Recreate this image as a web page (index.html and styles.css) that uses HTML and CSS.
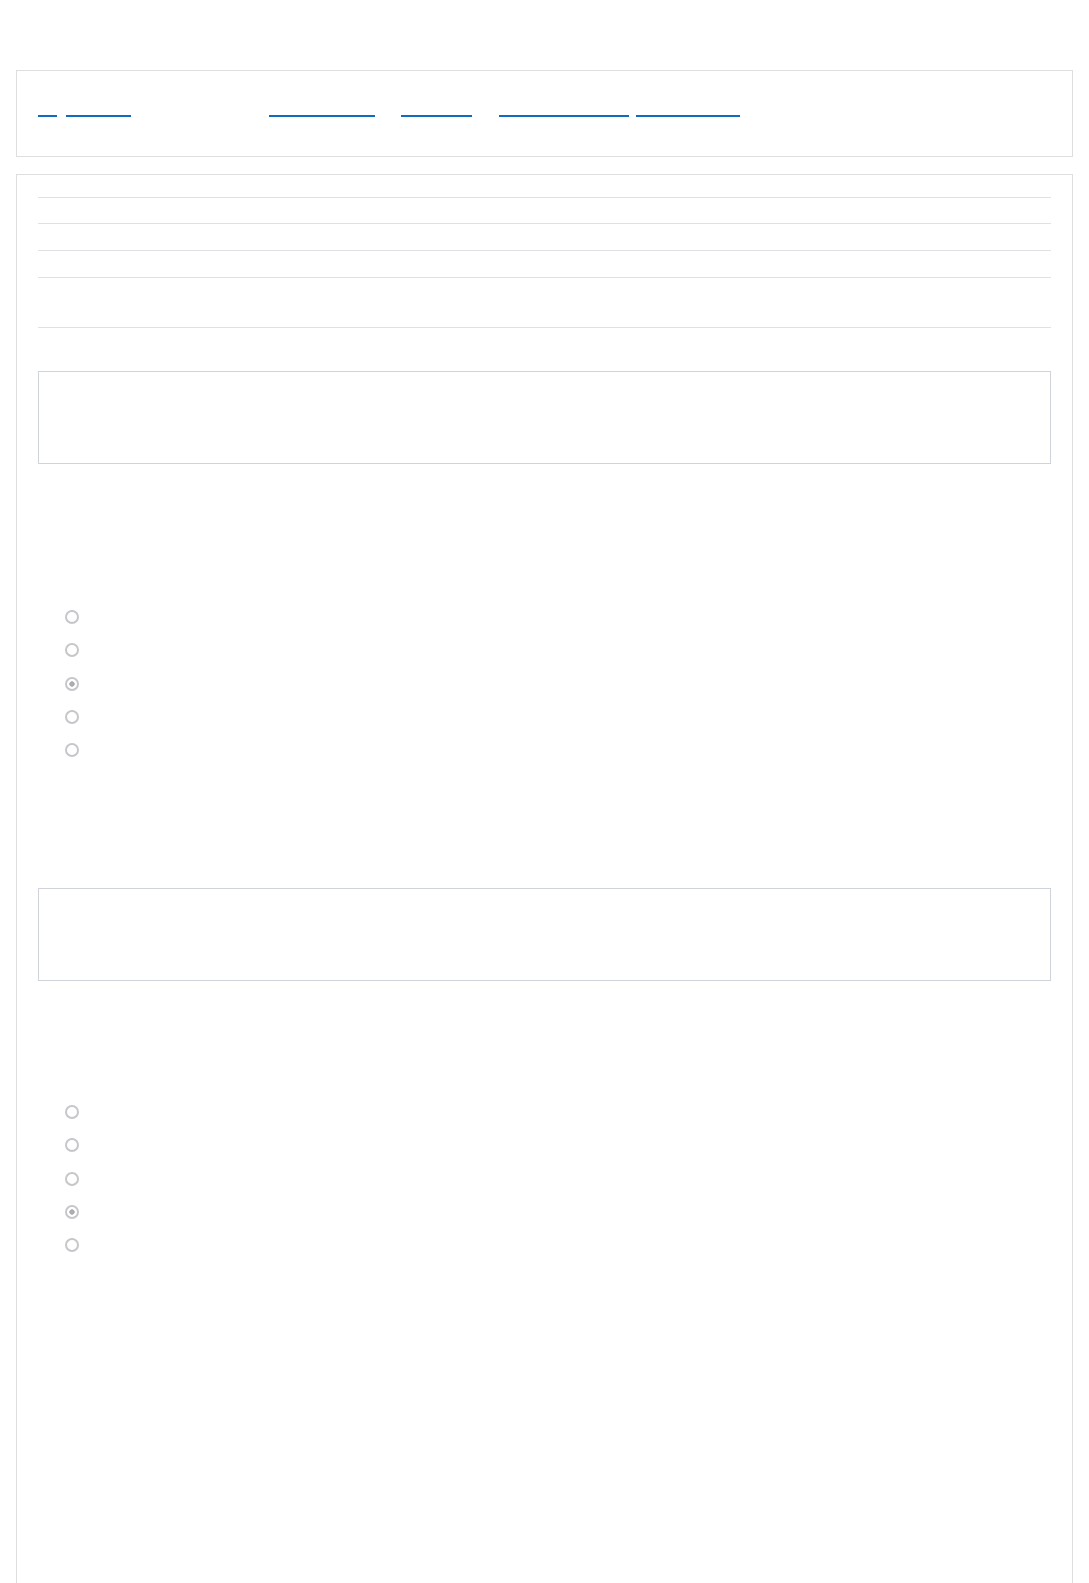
FILE: index.html
```html
<!DOCTYPE html>
<html>
<head>
<meta charset="utf-8">
<title>Quiz review</title>
<link rel="stylesheet" href="styles.css">
</head>
<body>

<div class="page">

  <div class="card header-card">
    <nav class="quiz-nav">
      <a class="nav-link lnk-1" href="#">Top</a>
      <a class="nav-link lnk-2" href="#">Dashboard</a>
      <span class="nav-text">My courses</span>
      <a class="nav-link lnk-3" href="#">General Science</a>
      <a class="nav-link lnk-4" href="#">Topic 2</a>
      <a class="nav-link lnk-5" href="#">Chapter review quiz</a>
      <a class="nav-link lnk-6" href="#">Review attempt</a>
    </nav>
  </div>

  <div class="card main-card">

    <div class="summary">
      <div class="summary-row"><span class="cell-head">Started on</span><span class="cell">Monday, 4 March 2024, 10:12 AM</span></div>
      <div class="summary-row"><span class="cell-head">State</span><span class="cell">Finished</span></div>
      <div class="summary-row"><span class="cell-head">Completed on</span><span class="cell">Monday, 4 March 2024, 10:21 AM</span></div>
      <div class="summary-row"><span class="cell-head">Time taken</span><span class="cell">9 mins 4 secs<br>Grade 2.00 out of 2.00 (100%)</span></div>
    </div>

    <div class="question">
      <textarea class="answer-box" readonly>Read the passage carefully before answering the question below.</textarea>
      <div class="q-text">
        <p class="line">Question 1</p>
        <p class="line">Correct</p>
        <p class="line">Mark 1.00 out of 1.00</p>
        <p class="line">Which of the following is the closest star to the Earth?</p>
      </div>
      <ul class="options">
        <li class="option"><input type="radio" name="q1" disabled><span class="opt-label">a. Proxima Centauri</span></li>
        <li class="option"><input type="radio" name="q1" disabled><span class="opt-label">b. Sirius</span></li>
        <li class="option"><input type="radio" name="q1" disabled checked><span class="opt-label">c. The Sun</span></li>
        <li class="option"><input type="radio" name="q1" disabled><span class="opt-label">d. Betelgeuse</span></li>
        <li class="option"><input type="radio" name="q1" disabled><span class="opt-label">e. Polaris</span></li>
      </ul>
    </div>

    <div class="question question-next">
      <textarea class="answer-box" readonly>Use the diagram shown in class to answer this question.</textarea>
      <div class="q-text">
        <p class="line">Question 2</p>
        <p class="line">Correct</p>
        <p class="line">Which planet has the shortest orbit around the Sun?</p>
      </div>
      <ul class="options">
        <li class="option"><input type="radio" name="q2" disabled><span class="opt-label">a. Venus</span></li>
        <li class="option"><input type="radio" name="q2" disabled><span class="opt-label">b. Earth</span></li>
        <li class="option"><input type="radio" name="q2" disabled><span class="opt-label">c. Mars</span></li>
        <li class="option"><input type="radio" name="q2" disabled checked><span class="opt-label">d. Mercury</span></li>
        <li class="option"><input type="radio" name="q2" disabled><span class="opt-label">e. Jupiter</span></li>
      </ul>
    </div>

  </div>

</div>

</body>
</html>
```

FILE: styles.css
```css
body {
  margin: 0;
  padding-top: 70px;
  background: #fff;
  font-family: "Liberation Sans", Arial, sans-serif;
  font-size: 15px;
  color: transparent;
}

.page { margin: 0 16px; }

.card {
  border: 1px solid #dedede;
  background: #fff;
}

/* header with the course path */
.header-card {
  height: 87px;
  box-sizing: border-box;
  padding: 24px 21px 0 21px;
  margin-bottom: 17px;
}
.quiz-nav {
  display: flex;
  align-items: flex-start;
  font-size: 11px;
}
.nav-link, .nav-text {
  display: block;
  height: 20px;
  line-height: 20px;
  overflow: hidden;
  white-space: nowrap;
  color: transparent;
  text-decoration: none;
}
.nav-link { border-bottom: 2px solid #0f6cbf; }
.nav-text { width: 138px; text-align: center; }

.lnk-1 { width: 19px; }
.lnk-2 { width: 65px; margin-left: 9px; }
.lnk-3 { width: 106px; }
.lnk-4 { width: 71px; margin-left: 26px; }
.lnk-5 { width: 130px; margin-left: 27px; }
.lnk-6 { width: 104px; margin-left: 7px; }

/* main review card */
.main-card {
  padding: 22px 21px 340px 21px;
}

.summary-row {
  display: flex;
  border-top: 1px solid #dee2e6;
  line-height: 26px;
  overflow: hidden;
}
.summary-row:first-child { line-height: 25px; }
.summary-row:last-child {
  line-height: 24.5px;
  border-bottom: 1px solid #dee2e6;
}
.cell-head { width: 180px; }
.cell { flex: 1; }

.question { margin-top: 43px; }
.question-next { margin-top: 121.3px; }

.answer-box {
  display: block;
  width: 100%;
  height: 93px;
  box-sizing: border-box;
  margin: 0;
  padding: 6px 12px;
  border: 1px solid #ced4da;
  border-radius: 0;
  resize: none;
  font: inherit;
  color: transparent;
  background: #fff;
}

.q-text { margin: 24px 0; }
.line {
  margin: 0;
  line-height: 22px;
  white-space: nowrap;
  overflow: hidden;
}

.options {
  list-style: none;
  margin: 0;
  padding: 0;
}
.option {
  display: flex;
  align-items: center;
  height: 33.33px;
}
.option input {
  appearance: none;
  -webkit-appearance: none;
  box-sizing: border-box;
  width: 14px;
  height: 14px;
  margin: 1px 0 0 27px;
  border: 2px solid #c6c6cb;
  border-radius: 50%;
  background: #fff;
}
.option input:checked {
  background: radial-gradient(circle, #acacb2 0 2.4px, #fff 3px);
}
.opt-label { margin-left: 8px; }
```
